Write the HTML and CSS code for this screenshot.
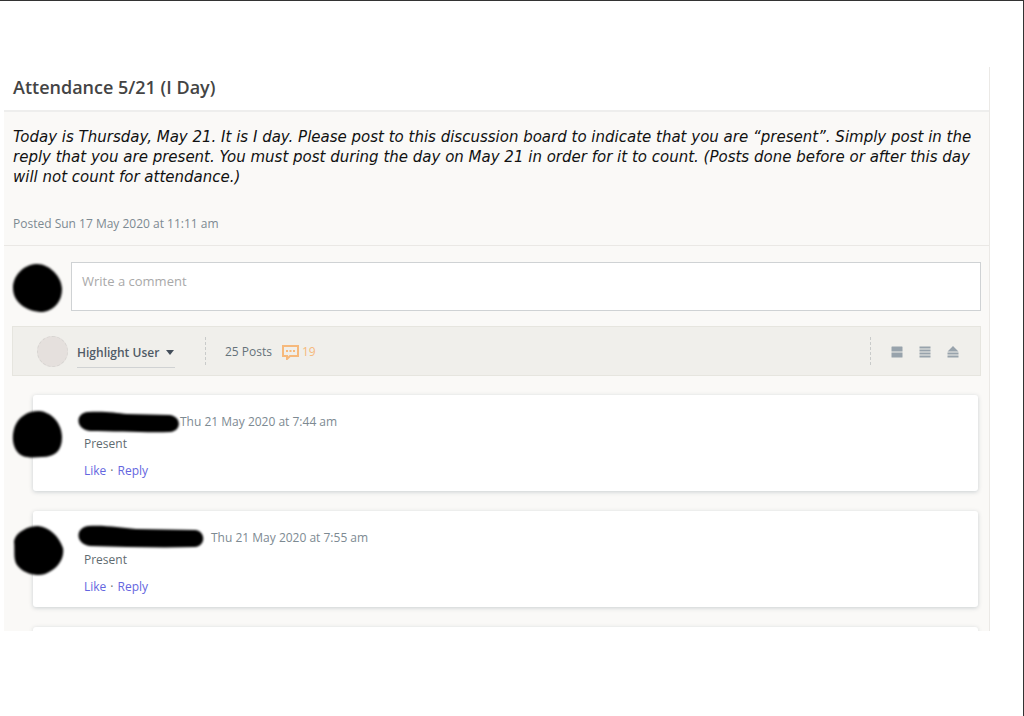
FILE: index.html
```html
<!DOCTYPE html>
<html lang="en">
<head>
    <meta charset="UTF-8">
    <meta name="viewport" content="width=device-width, initial-scale=1.0">
    <title>Attendance 5/21 (I Day)</title>
    <link rel="stylesheet" href="styles.css">
</head>
<body>
    <main class="discussion">
        <h1 class="title">Attendance 5/21 (I Day)</h1>

        <section class="prompt">
            <p class="prompt-text">Today is Thursday, May 21. It is I day. Please post to this discussion board to indicate that you are “present”. Simply post in the reply that you are present. You must post during the day on May 21 in order for it to count. (Posts done before or after this day will not count for attendance.)</p>
            <p class="posted">Posted Sun 17 May 2020 at 11:11 am</p>
        </section>

        <section class="thread">
            <!-- New comment -->
            <form class="new-comment">
                <svg class="avatar" viewBox="0 0 56 56" aria-hidden="true">
                    <path d="M27 4C39 3 53 16 53 29C53 41 46 50 34 52C17 52 4 42 4 28C4 16 14 5 27 4Z"/>
                </svg>
                <textarea class="comment-box" rows="1" placeholder="Write a comment" aria-label="Write a comment"></textarea>
            </form>

            <!-- Toolbar -->
            <div class="toolbar">
                <span class="user-circle"></span>
                <span class="user-picker">
                    <select class="user-select" aria-label="Highlight User">
                        <option>Highlight User</option>
                    </select>
                    <svg class="caret" viewBox="0 0 8 5" aria-hidden="true"><path d="M0 0h8L4 5z"/></svg>
                </span>
                <div class="counts">
                    <span>25 Posts</span>
                    <span class="unread">
                        <svg class="bubble" viewBox="0 0 17 15" aria-hidden="true">
                            <path d="M1 1h15v10H8l-3 3v-3H1z" fill="none" stroke="currentColor" stroke-width="2"/>
                            <path d="M4 5h2v2H4zM7.500 5h2v2h-2zM11 5h2v2h-2z" fill="currentColor"/>
                        </svg>
                        19
                    </span>
                </div>
                <div class="views">
                    <button class="view" type="button" aria-label="Expanded view">
                        <svg viewBox="0 0 12 12"><path d="M1 .5h10q.5 0 .5.500v4.500H.5V1q0-.5.500-.5zM.5 6.500h11v4.500q0 .5-.5.500H1q-.5 0-.5-.5z"/></svg>
                    </button>
                    <button class="view" type="button" aria-label="List view">
                        <svg viewBox="0 0 12 12"><path d="M.5.500h11v2H.5zM.5 3.500h11v2H.5zM.5 6.500h11v2H.5zM.5 9.500h11v2H.5z"/></svg>
                    </button>
                    <button class="view" type="button" aria-label="Collapse all">
                        <svg viewBox="0 0 12 12"><path d="M6 0l5.500 5.500H.5zM.5 6.500h11v2H.5zM.5 9.500h11v2H.5z"/></svg>
                    </button>
                </div>
            </div>

            <!-- Posts -->
            <article class="post">
                <svg class="avatar" viewBox="0 0 56 56" aria-hidden="true">
                    <path d="M30 4C43 5 53 17 53 30C53 44 46 50 33 50C20 51 12 51 7 43C3 36 3 27 6 19C10 10 18 4 30 4Z"/>
                </svg>
                <div class="post-head">
                    <svg class="name" width="102" height="26" viewBox="0 0 102 26" aria-hidden="true">
                        <path d="M10 3C28 2 38 4 49 5L91 6C104 7 104 22 92 23C70 24 38 22 12 22C-3 20-3 4 10 3Z"/>
                    </svg>
                    <time>Thu 21 May 2020 at 7:44 am</time>
                </div>
                <p class="post-text">Present</p>
                <div class="actions"><a href="#">Like</a><span>·</span><a href="#">Reply</a></div>
            </article>

            <article class="post">
                <svg class="avatar" viewBox="0 0 56 56" aria-hidden="true">
                    <path d="M29 3C40 4 50 13 54 25C56 37 47 47 36 51C26 54 14 50 8 42C4 36 6 28 5 18C7 9 19 3 29 3Z"/>
                </svg>
                <div class="post-head">
                    <svg class="name" width="133" height="26" viewBox="0 0 133 26" aria-hidden="true">
                        <path d="M10 1C30 0 42 3 58 4L117 5C128 6 128 21 117 22C84 23 46 22 12 21C-3 19-3 3 10 1Z"/>
                    </svg>
                    <time>Thu 21 May 2020 at 7:55 am</time>
                </div>
                <p class="post-text">Present</p>
                <div class="actions"><a href="#">Like</a><span>·</span><a href="#">Reply</a></div>
            </article>

            <div class="next-post"></div>
        </section>
    </main>
</body>
</html>
```

FILE: styles.css
```css
* {
    box-sizing: border-box;
}
body {
    margin: 0;
    min-height: 100vh;
    padding: 66px 33px 80px 4px;
    border-top: 1px solid #333;
    border-right: 1px solid #333;
    background-color: #fff;
    font-family: "Open Sans", sans-serif;
    font-size: 12px;
    line-height: 20px;
    color: #5f6b70;
}
p {
    margin: 0;
}
.discussion {
    border-right: 1px solid #ebe9e6;
    background-color: #faf9f7;
}
.title {
    margin: 0;
    padding: 8px 9px 10px;
    border-bottom: 2px solid #eeeeed;
    background-color: #fff;
    font-size: 18px;
    line-height: 25px;
    font-weight: 600;
    color: #444;
}
.prompt {
    padding: 15px 9px 11px;
    border-bottom: 1px solid #eae8e5;
}
.prompt-text {
    margin-bottom: 27px;
    font-family: Verdana, "DejaVu Sans", sans-serif;
    font-size: 15px;
    font-style: italic;
    color: #111;
}
.posted {
    color: #7d8a92;
}
.thread {
    padding: 16px 8px 0;
    overflow: hidden;
}

/* New comment */
.new-comment {
    display: flex;
    margin-bottom: 15px;
}
.avatar {
    flex: none;
    width: 56px;
    height: 56px;
    filter: blur(1px);
}
.new-comment .avatar {
    margin: -2px 6px -5px -3px;
}
.comment-box {
    flex: 1;
    height: 49px;
    padding: 8px 10px;
    border: 1px solid #cfd2d4;
    border-radius: 0;
    resize: none;
    background-color: #fff;
    font: inherit;
    font-size: 13px;
}
.comment-box::placeholder {
    color: #a9a9a9;
}

/* Toolbar */
.toolbar {
    display: flex;
    align-items: center;
    height: 50px;
    margin-bottom: 19px;
    padding: 0 21px 0 24px;
    border: 1px solid #e6e5df;
    background-color: #f0efeb;
}
.user-circle {
    width: 31px;
    height: 31px;
    border: 1px dashed #d8d5d2;
    border-radius: 50%;
    background-color: #e5e0dd;
}
.user-picker {
    position: relative;
    margin: 4px 30px 0 9px;
}
.user-select {
    width: 98px;
    height: 29px;
    padding: 0;
    border: 0;
    border-bottom: 1px solid #d0d2d3;
    border-radius: 0;
    appearance: none;
    background: none;
    font: inherit;
    font-weight: 600;
    color: #505b66;
}
.caret {
    position: absolute;
    top: 11px;
    right: 1px;
    width: 8px;
    height: 5px;
    fill: #434e5a;
    pointer-events: none;
}
.counts {
    display: flex;
    align-items: center;
    gap: 10px;
    height: 28px;
    padding: 2px 0 0 19px;
    border-left: 1px dashed #c9cbca;
    color: #66727a;
}
.unread {
    display: flex;
    align-items: center;
    gap: 3px;
    color: #f6b97c;
}
.bubble {
    width: 17px;
    height: 15px;
}
.views {
    display: flex;
    align-items: center;
    gap: 16px;
    height: 28px;
    margin-left: auto;
    padding: 2px 0 0 20px;
    border-left: 1px dashed #c9cbca;
}
.view {
    display: flex;
    padding: 0;
    border: 0;
    background: none;
    cursor: pointer;
}
.view svg {
    width: 12px;
    height: 12px;
    fill: #98a3ac;
}

/* Posts */
.post {
    position: relative;
    height: 96px;
    margin: 0 3px 20px 21px;
    padding: 15px 45px 0;
    border-radius: 3px;
    background-color: #fff;
    box-shadow: 0 1px 4px rgba(90, 110, 120, 0.3);
}
.post .avatar {
    position: absolute;
    top: 12px;
    left: -24px;
}
.post-head {
    display: flex;
    align-items: center;
    height: 24px;
    color: #7d8a92;
}
.name {
    filter: blur(1px);
}
.post-text,
.actions {
    padding-left: 6px;
}
.actions {
    display: flex;
    gap: 4px;
    margin-top: 7px;
}
.actions a {
    color: #6466e0;
    text-decoration: none;
}
.next-post {
    height: 4px;
    margin: 0 3px 0 21px;
    border-radius: 3px 3px 0 0;
    background-color: #fff;
    box-shadow: 0 1px 4px rgba(90, 110, 120, 0.3);
}
```
